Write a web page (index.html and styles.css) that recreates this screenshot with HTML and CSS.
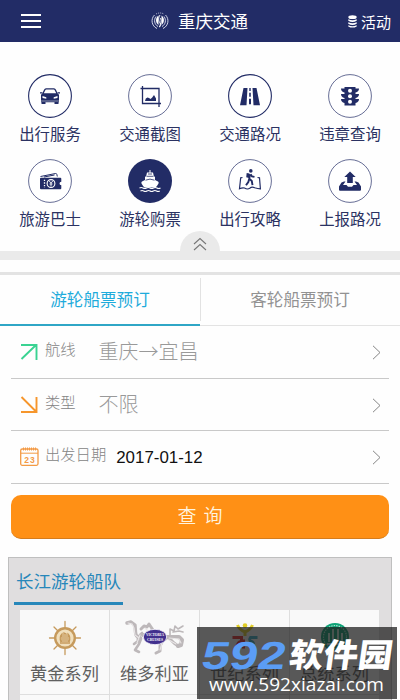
FILE: index.html
```html
<!DOCTYPE html>
<html lang="zh-CN">
<head>
<meta charset="utf-8">
<title>重庆交通</title>
<link rel="stylesheet" href="styles.css">
</head>
<body>
<div class="app">
  <header class="topbar">
    <svg class="menu" width="20" height="16" viewBox="0 0 20 16"><path d="M0 2h20M0 8h20M0 14h20" stroke="#fff" stroke-width="1.8"/></svg>
    <div class="brand">
      <svg width="18" height="18" viewBox="0 0 18 18" fill="none" stroke="#e4e6f4"><path d="M5 2Q9 0 13 2" stroke-width=".8" stroke-dasharray="1 1"/><path d="M3.500 3C-.5 7 .5 14 6 16.500M14.500 3c4 4 3 11-2.500 13.500" stroke-width=".9"/><path d="M5 4.500C2.500 8 3.500 12.500 7 14.500M13 4.500c2.500 3.500 1.500 8-2 10" stroke-width=".9"/><path d="M7.500 3.500C4 6 4.500 11 7.500 13zM10.500 3.500c3.500 2.500 3 7.500 0 9.500z" fill="#fff" stroke="none"/><path d="M9 3C7 6 7.500 9 9 11s0 4-1 4M9.500 6c1.500 3 0 6-1 9" stroke="#fff" stroke-width=".9"/></svg>
      <span>重庆交通</span>
    </div>
    <div class="activity">
      <svg width="9" height="13" viewBox="0 0 9 13" fill="#fff"><ellipse cx="4.500" cy="2.200" rx="4.200" ry="1.900"/><path d="M.3 4.200q4.200 2 8.400 0v1.600q-4.200 2.400-8.400 0zM.3 7.200q4.200 2 8.400 0v1.600q-4.200 2.400-8.400 0zM.3 10.200q4.200 2 8.400 0v1.200q-4.200 2.400-8.400 0z"/></svg>
      <span>活动</span>
    </div>
  </header>

  <nav class="services">
    <a class="service"><svg class="ring bold" viewBox="0 0 44 44"><circle cx="22" cy="22" r="21.400"/><path class="solid" fill-rule="evenodd" d="M14.300 19.500l1.700-3.700q.6-1.500 2-1.500h8q1.400 0 2 1.500l1.700 3.700 1.300 1.300v6H13v-6zM15.800 19.200h12.400l-1.500-3q-.3-.8-1-.8h-7.400q-.7 0-1 .8zM14.500 22v2l3.800.8v-1.500zm15 0-3.800 1.300v1.500l3.800-.8z"/><path class="solid" d="M12 18.300h2.500v1.300H12zM29.500 18.300H32v1.300h-2.500zM13 27.300h18v.9H13zM13.500 28h4v2h-4zM26.500 28h4v2h-4z"/></svg><span>出行服务</span></a>
    <a class="service"><svg class="ring" viewBox="0 0 44 44"><circle cx="22" cy="22" r="21.400"/><path class="line" d="M14.500 12v17.500H33M12.500 14.500H31V33" stroke-width="1.300"/><path class="solid" d="M17 27l.8-2.500 1.700-1 1.500.5 1.500 1 1.700-1.500 1.800-2.500 2 3.500V27z"/></svg><span>交通截图</span></a>
    <a class="service"><svg class="ring bold" viewBox="0 0 44 44"><circle cx="22" cy="22" r="21.400"/><path class="solid" d="M15.500 14H19.500L18.500 31.200H12zM28.500 14H24.500L25.500 31.200H32zM21.300 14h1.400v3h-1.400zM21.200 18.800h1.600v4h-1.600zM21 24.800h2v5.500h-2z"/></svg><span>交通路况</span></a>
    <a class="service"><svg class="ring" viewBox="0 0 44 44"><circle cx="22" cy="22" r="21.400"/><path class="solid" d="M16.500 13h11v1.500H31q0 3-3.500 4v1.500H31q0 3-3.500 4v1H31q0 3-3.500 4v2.500h-11V29q-3.500-1-3.500-4h3.500v-1q-3.500-1-3.500-4h3.500v-1.500q-3.500-1-3.500-4h3.500z"/><g fill="#fff"><circle cx="22" cy="16.700" r="2"/><circle cx="22" cy="22.200" r="2"/><circle cx="22" cy="27.700" r="2"/></g></svg><span>违章查询</span></a>
    <a class="service"><svg class="ring" viewBox="0 0 44 44"><circle cx="22" cy="22" r="21.400"/><path class="line" d="M12.500 17.500l15-3q1-.2 1.300.8l.5 2.200M16 18l10.500-2" stroke-width="1"/><path class="solid" d="M13 18.700h19.300q1 0 1 1v3q-1.800.3-1.800 1.800t1.800 1.800v3q0 1-1 1H13q-1 0-1-1v-9.600q0-1 1-1z"/><circle cx="23" cy="24.500" r="3.900" fill="none" stroke="#fff" stroke-width="1.100"/><path d="M21.300 22l1.700 2.300 1.700-2.300M23 24.300v3M21.500 25h3" fill="none" stroke="#fff" stroke-width=".9"/><path d="M16.500 20.700v8" stroke="#fff" stroke-width="1.300" stroke-dasharray="1.400 1.200"/></svg><span>旅游巴士</span></a>
    <a class="service"><svg class="ring filled" viewBox="0 0 44 44"><circle cx="22" cy="22" r="22"/><path fill="#fff" d="M21.500 11h1v2.500h2.500l.8 3.500 1.200 1v3l3 1.500q1 .7.500 2-1 2-3 4H16.500q-2-2-3-4-.5-1.300.5-2l3-1.500v-3l1.200-1 .8-3.500h2.500z"/><path d="M18.500 17.300h7M17.500 21.200q4.500-2.200 9 0M20 15h4" stroke="#222c66" stroke-width=".8" fill="none"/><path d="M11.500 29q1.700-1 3.500 0t3.500 0 3.500 0 3.500 0 3.500 0 3.500 0M12.500 32q1.600-1 3.200 0t3.200 0 3.200 0 3.200 0 3.200 0 3.200 0" stroke="#fff" stroke-width="1.100" fill="none"/></svg><span>游轮购票</span></a>
    <a class="service"><svg class="ring" viewBox="0 0 44 44"><circle cx="22" cy="22" r="21.400"/><path class="line" d="M14.500 18.500l-1.800.3-1.200 11q3-1.500 5-.8 3 1.800 5.200.3 2.200-2 5-.6 3 1.100 5.700 1.100L31.500 18.800l-2-.3" stroke-width="1.200"/><g class="solid"><circle cx="22.800" cy="11.900" r="1.800"/><path d="M18.700 14l2.800.5-.5 4.500-2.800-.7z"/></g><path class="line" d="M22 15.200l-.7 4.500 2.500 2.300.7 4.200M21.300 19.700l-1 3.300-2.300 3.300M22.600 15.200l1.400 2.300 2.500.4" stroke-width="1.900"/></svg><span>出行攻略</span></a>
    <a class="service"><svg class="ring" viewBox="0 0 44 44"><circle cx="22" cy="22" r="21.400"/><path class="solid" d="M22 12.500l5.700 5.500H24.800v6h-5.600v-6h-2.900zM13.500 23.500l2.500-1h1.500l-2.500 3.500h3.500l1.500 1.700h4l1.500-1.700H29l-2.500-3.500H28l2.500 1L33 27.500v3.300q0 1-1 1H12q-1 0-1-1v-3.300z"/></svg><span>上报路况</span></a>
    <button class="collapse"><svg width="14" height="14" viewBox="0 0 14 14"><path d="M1 7l6-5.500L13 7M1 13l6-5.500 6 5.500" fill="none" stroke="#777" stroke-width="1.100"/></svg></button>
  </nav>
  <div class="band"></div>

  <div class="tabs">
    <div class="tab active">游轮船票预订</div>
    <div class="tab">客轮船票预订</div>
  </div>

  <form class="booking">
    <div class="field">
      <svg class="mark" viewBox="0 0 19 19"><path d="M1.500 17L16 3M1 3h15.500v15" fill="none" stroke="#3ad392" stroke-width="1.900"/></svg>
      <label>航线</label><span class="value">重庆→宜昌</span>
      <svg class="chevron" viewBox="0 0 9 15"><path d="M1 .8l7 6.700-7 6.700"/></svg>
    </div>
    <div class="field">
      <svg class="mark" viewBox="0 0 19 19"><path d="M1.500 2L16 16.500M1 17h15.500V2" fill="none" stroke="#f6962c" stroke-width="1.900"/></svg>
      <label>类型</label><span class="value">不限</span>
      <svg class="chevron" viewBox="0 0 9 15"><path d="M1 .8l7 6.700-7 6.700"/></svg>
    </div>
    <div class="field">
      <svg class="mark" viewBox="0 0 19 19"><rect x=".7" y="2" width="17.300" height="16.300" rx="1.500" fill="none" stroke="#f39a45" stroke-width="1.300"/><path d="M.7 6.200H18" stroke="#f39a45"/><path d="M3 2h13" stroke="#f39a45" stroke-width="3" stroke-dasharray="1 1"/><text x="9.900" y="15.600" text-anchor="middle" class="day">23</text></svg>
      <label>出发日期</label><span class="date">2017-01-12</span>
      <svg class="chevron" viewBox="0 0 9 15"><path d="M1 .8l7 6.700-7 6.700"/></svg>
    </div>
    <button type="button" class="submit"><span>查</span><span>询</span></button>
  </form>

  <section class="fleet">
    <h2>长江游轮船队</h2>
    <div class="cards">
      <div class="card"><svg width="34" height="36" viewBox="-17 -18 34 36"><g stroke="#c69a5c" stroke-width="1.300" stroke-linecap="round"><path d="M0-16.500V-10M0 10v6.500M-15.500 0H-10M10 0h5.500M-11-11l4 4M7 7l4 4M11-11l-4 4M-7 7l-4 4"/></g><circle r="9.800" fill="#f0dfbd" stroke="#c69a5c" stroke-width="2.400"/><path d="M-4 4q-2-5 1-8v8m2 0v-9l2 1v8m2 0v-8q3 3 1 8M-5 5H5" fill="none" stroke="#c69a5c" stroke-width="1.300"/></svg><span>黄金系列</span></div>
      <div class="card"><svg width="60" height="36" viewBox="0 0 60 36"><g fill="none" stroke="#bdb8ba" stroke-linecap="round" stroke-linejoin="round"><path d="M2 3l4-1 4 3 .5 7q0 5 5 6" stroke-width="3.400"/><path d="M16 9l3-3 3 1 2-3 2 3 2 3" stroke-width="3"/><path d="M17 13q-5 4-4 8l-4 3M16 19l-2 5-4 6 4 2" stroke-width="2.600"/><path d="M18 15q8 2 14 4t10-2l12 0 3 3-1 5-3 1" stroke-width="4"/><path d="M38 20l-3 6 0 5-4 2M43 17l6 6 4 3" stroke-width="3"/><path d="M45 15l0-6 4 2 1-5 3 3 5-3M48 12l6-1 4 1" stroke-width="1.600"/></g><g fill="none" stroke="#e9e6e7" stroke-width="1.100" stroke-linecap="round"><path d="M3 3l4 1 2 4 1 7 4 3M20 8l4 4M15 15l-3 8M44 18l10 1 2 4M37 23l-2 7M44 20l7 4"/></g><ellipse cx="30" cy="17" rx="11.700" ry="7.700" fill="#41308e" stroke="#fff" stroke-width=".8"/><text x="30" y="16.300" text-anchor="middle" class="crest" textLength="18" lengthAdjust="spacingAndGlyphs">VICTORIA</text><text x="30" y="21.300" text-anchor="middle" class="crest" textLength="16" lengthAdjust="spacingAndGlyphs">CRUISES</text></svg><span>维多利亚</span></div>
      <div class="card"><svg width="30" height="36" viewBox="0 0 30 36" fill="none" stroke-width="3"><path d="M7.500 5q2 5 7.500 7v4M22.500 5q-2 5-7.500 7" stroke="#e1ce27"/><circle cx="15" cy="5.500" r="2.300" fill="#e1ce27"/><path d="M2.500 17.500h9v4q-4 0-5 7M13.500 19.500v9" stroke="#e82c2c"/><path d="M27.500 17.500h-7q-2 3 1 4t2 7" stroke="#3eb3ca"/></svg><span>世纪系列</span></div>
      <div class="card"><svg width="30" height="36" viewBox="0 0 30 36"><circle cx="15" cy="17" r="14" fill="#0ca276"/><circle cx="15" cy="17" r="11.500" fill="none" stroke="#a9dfca" stroke-width="1.200" stroke-dasharray="1.500 1"/><path d="M9 22v-9m4 9V9m5 13V9m4 13v-9M7 24h16" stroke="#d6efe3" stroke-width="1.800"/></svg><span>总统系列</span></div>
      <div class="card"></div><div class="card"></div><div class="card"></div><div class="card"></div>
    </div>
  </section>

  <div class="watermark">
    <svg width="200" height="72" viewBox="0 0 200 72">
      <text class="num" transform="translate(3 42) skewX(-10)" textLength="84" lengthAdjust="spacingAndGlyphs">592</text>
      <text class="name" transform="translate(91 40) skewX(-8)" textLength="103" lengthAdjust="spacingAndGlyphs">软件园</text>
      <text class="url" x="12" y="64" textLength="175" lengthAdjust="spacingAndGlyphs">www.592xiazai.com</text>
    </svg>
  </div>
</div>
</body>
</html>
```

FILE: styles.css
```css
* { box-sizing: border-box; }
body {
  margin: 0;
  background: #fefefe;
  font-family: "Noto Sans CJK SC", sans-serif;
}
.app {
  position: relative;
  width: 400px;
  height: 700px;
  overflow: hidden;
}
.topbar {
  display: grid;
  grid-template-columns: 100px 1fr 100px;
  align-items: center;
  height: 42px;
  background: #222c66;
  color: #fff;
}
.menu { margin-left: 21px; }
.brand {
  display: flex;
  align-items: center;
  justify-content: center;
  gap: 9px;
  padding-right: 1px;
  font-size: 17.5px;
  line-height: 40px;
}
.activity {
  display: flex;
  align-items: center;
  justify-content: flex-end;
  gap: 4px;
  padding-right: 9px;
  font-size: 15px;
  line-height: 41px;
}
.services {
  position: relative;
  display: grid;
  grid-template-columns: repeat(4, 1fr);
  grid-auto-rows: 85.5px;
  height: 209px;
  padding-top: 31.5px;
}
.service {
  display: flex;
  flex-direction: column;
  align-items: center;
  gap: 4px;
  color: #2b3262;
  font-size: 15.4px;
  line-height: 22px;
}
.ring { width: 44px; height: 44px; flex: none; }
.ring > circle:first-child { fill: #fff; stroke: #555c89; stroke-width: .9; }
.ring.bold > circle:first-child { stroke: #222c66; stroke-width: 1.1; }
.ring.filled > circle:first-child { fill: #222c66; stroke: none; }
.solid { fill: #222c66; }
.line { fill: none; stroke: #222c66; }
.collapse {
  position: absolute;
  left: 180px;
  bottom: 0;
  width: 40px;
  height: 20px;
  padding: 6px 0 0;
  border: 0;
  border-radius: 20px 20px 0 0;
  background: #eaeaea;
  line-height: 0;
}
.band { height: 9px; background: #eaeaea; }
.tabs {
  display: flex;
  height: 54px;
  margin-top: 12px;
  border-top: 3px solid #e3e3e3;
}
.tab {
  width: 200px;
  border-bottom: 1px solid #e3e3e3;
  color: #929292;
  font-size: 16.6px;
  line-height: 48px;
  text-align: center;
}
.tab + .tab {
  background: linear-gradient(#e2e2e2, #e2e2e2) 0 3px / 1px 43px no-repeat;
}
.tab.active {
  border-bottom: 2px solid #2fa6c6;
  color: #1eabdb;
}
.booking { padding: 0 11px; }
.field {
  display: flex;
  align-items: center;
  height: 52.5px;
  padding: 0 8px 0 9px;
  border-bottom: 1px solid #c9c9c9;
  font-weight: 300;
}
.mark { width: 19px; height: 19px; flex: none; }
.field label {
  margin: -7px 0 0 6px;
  color: #858585;
  font-size: 15.3px;
  line-height: 24px;
}
.value {
  margin: -1px 0 0 23px;
  color: #999;
  font-size: 20px;
  line-height: 28px;
}
.date {
  margin: 3px 0 0 10px;
  color: #111;
  font: 400 16.9px "Liberation Sans", sans-serif;
}
.chevron {
  width: 9px;
  height: 15px;
  margin: 2px 0 0 auto;
  fill: none;
  stroke: #858585;
}
.day { fill: #f39a45; font: 700 8.5px "Liberation Sans", sans-serif; letter-spacing: 1px; }
.submit {
  display: flex;
  justify-content: center;
  gap: 7px;
  width: 378px;
  height: 44px;
  margin-top: 11.5px;
  padding: 0;
  border: 0;
  border-bottom: 1px solid #d57c1c;
  border-radius: 10px;
  background: #ff9015;
  color: #fff3df;
  font: 350 19px/39px "Noto Sans CJK SC", sans-serif;
}
.fleet {
  width: 384px;
  height: 160px;
  margin: 17.5px 0 0 8px;
  border: 1px solid #bfbfbf;
  background: #e0dedf;
}
.fleet h2 {
  width: 109px;
  height: 47px;
  margin: 0 0 5px 5px;
  padding-left: 2px;
  border-bottom: 3px solid #2787ba;
  color: #2787ba;
  font-size: 17.5px;
  font-weight: 400;
  line-height: 45px;
  white-space: nowrap;
}
.cards {
  display: grid;
  grid-template-columns: repeat(4, 90px);
  grid-auto-rows: 85px;
  margin-left: 11px;
}
.card {
  display: flex;
  flex-direction: column;
  align-items: center;
  padding-top: 10px;
  border-right: 1px solid #dedede;
  border-bottom: 1px solid #dedede;
  background: #f9f9f9;
  color: #606060;
  font-size: 17.2px;
  line-height: 34px;
}
.crest { fill: #fff; font: 700 5px "Liberation Serif", serif; }
.watermark {
  position: absolute;
  left: 197px;
  top: 627px;
  width: 200px;
  height: 72px;
  background: rgba(28, 28, 28, .73);
}
.num { fill: #5b9df5; font: 700 39px "Liberation Sans", sans-serif; }
.name { fill: #fff; font: 900 33px "Noto Sans CJK SC", sans-serif; }
.url { fill: #fff; font: 500 19px "Open Sans", sans-serif; }
```
